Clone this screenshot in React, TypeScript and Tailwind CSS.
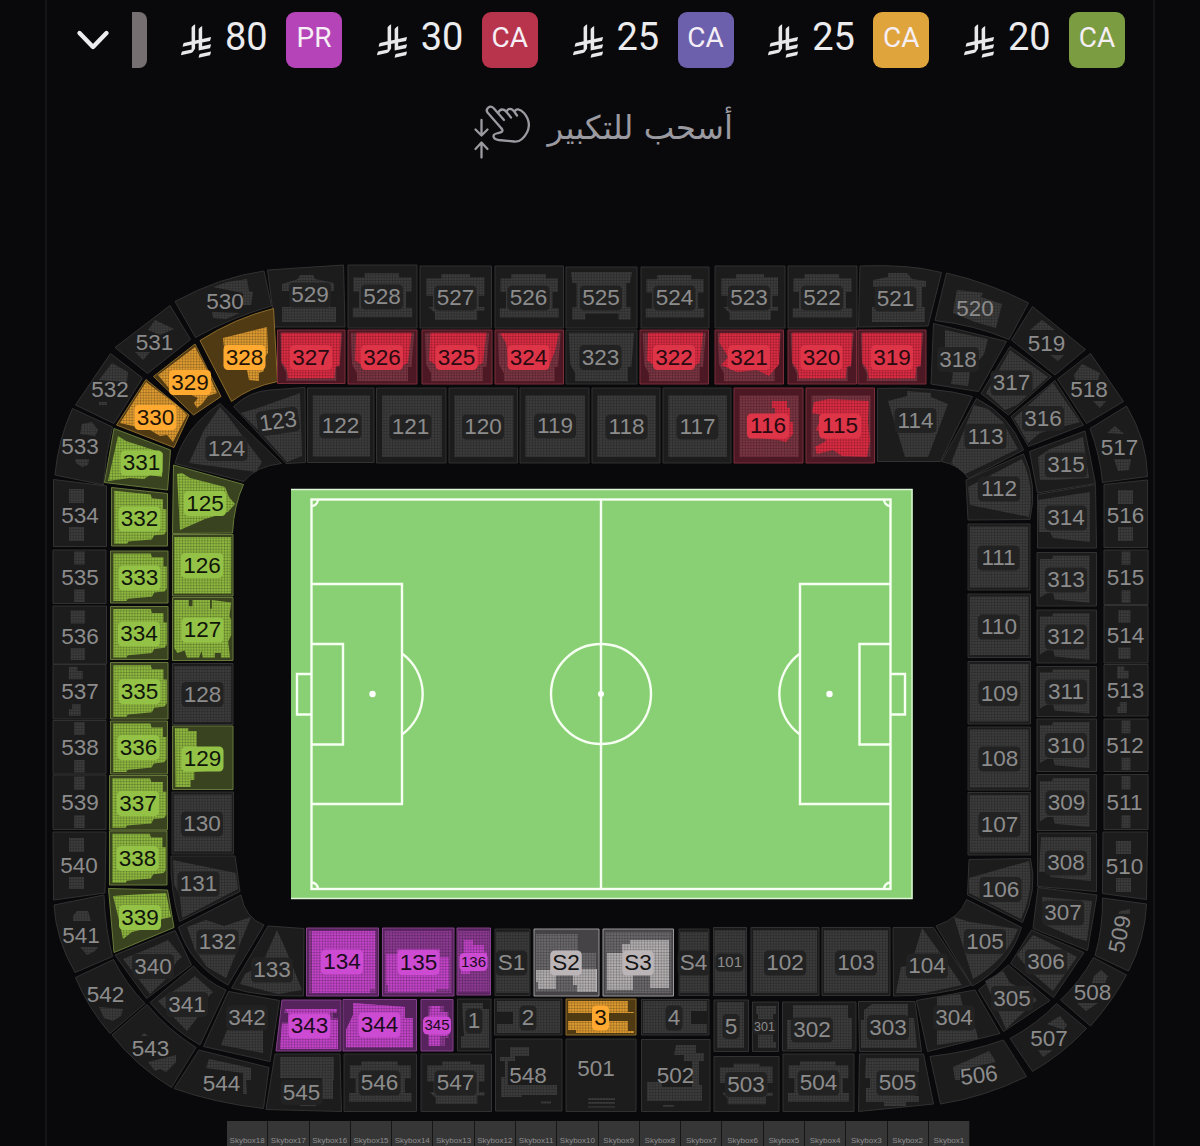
import { memo } from "react";

type Tone = "off" | "red" | "green" | "amber" | "purple" | "light";

interface Block {
  id: string;
  // four corners, clockwise from the top left
  box: number[];
  x: number;
  y: number;
  tone?: Tone;
  // outline for the blocks that follow the bend of the bowl
  d?: string;
  // template name or a path of its own
  seats?: string;
  // seats still on sale, drawn brighter
  free?: string;
  size?: number;
  rotate?: number;
}

const TONES: Record<
  Tone,
  { fill: string; line: string; seats: string; free: string; chip: string; text: string }
> = {
  off: { fill: "#1c1c1d", line: "#313131", seats: "#3c3c3c", free: "#3c3c3c", chip: "#222222", text: "#8c8c8c" },
  red: { fill: "#4b1823", line: "#7d2c3a", seats: "#7a3542", free: "#dc2c43", chip: "#dd3448", text: "#2a0a10" },
  green: { fill: "#39431f", line: "#66783a", seats: "#8fb840", free: "#8fb840", chip: "#93c247", text: "#10150a" },
  amber: { fill: "#4f3a14", line: "#8b6a2a", seats: "#dd9a30", free: "#dd9a30", chip: "#ffa931", text: "#1f1405" },
  purple: { fill: "#56235c", line: "#84408a", seats: "#8c3a92", free: "#c244c8", chip: "#cc4bd2", text: "#1c0a1e" },
  light: { fill: "#454345", line: "#9b999b", seats: "#6a686a", free: "#b3afb1", chip: "#bcb5b7", text: "#151515" },
};

// Seat areas as fractions of a block
const TEMPLATES: Record<string, number[][]> = {
  upper: [[0.08, 0.2, 0.24, 0.2, 0.24, 0.13, 0.74, 0.13, 0.74, 0.2, 0.92, 0.2, 0.92, 0.42, 0.84, 0.42, 0.84, 0.68, 0.93, 0.68, 0.93, 0.83, 0.07, 0.83, 0.07, 0.68, 0.16, 0.68, 0.16, 0.42, 0.08, 0.42]],
  upperB: [[0.09, 0.2, 0.3, 0.2, 0.3, 0.13, 0.7, 0.13, 0.7, 0.18, 0.9, 0.18, 0.9, 0.48, 0.82, 0.48, 0.82, 0.66, 0.9, 0.66, 0.9, 0.72, 0.8, 0.72, 0.8, 0.87, 0.21, 0.87, 0.21, 0.76, 0.12, 0.66, 0.18, 0.66, 0.18, 0.48, 0.09, 0.48]],
  upperC: [[0.07, 0.08, 0.93, 0.08, 0.9, 0.26, 0.85, 0.26, 0.85, 0.66, 0.91, 0.66, 0.91, 0.86, 0.74, 0.86, 0.74, 0.76, 0.27, 0.76, 0.27, 0.86, 0.09, 0.86, 0.09, 0.66, 0.15, 0.66, 0.15, 0.26, 0.09, 0.26]],
  lower: [[0.04, 0.05, 0.96, 0.05, 0.92, 0.68, 0.87, 0.68, 0.87, 0.95, 0.13, 0.95, 0.13, 0.8, 0.06, 0.64]],
  lowerFree: [[0.12, 0.05, 0.92, 0.05, 0.87, 0.6, 0.7, 0.74, 0.26, 0.7, 0.1, 0.56]],
  lowerWide: [[0.06, 0.05, 0.94, 0.05, 0.92, 0.66, 0.86, 0.68, 0.84, 0.9, 0.16, 0.9, 0.14, 0.74, 0.06, 0.6]],
  full: [[0.08, 0.1, 0.94, 0.1, 0.94, 0.92, 0.08, 0.92]],
  whole: [[0.03, 0.04, 0.97, 0.04, 0.97, 0.96, 0.03, 0.96]],
  left: [[0.05, 0.05, 0.7, 0.05, 0.72, 0.12, 0.92, 0.12, 0.92, 0.3, 0.98, 0.3, 0.98, 0.72, 0.94, 0.78, 0.76, 0.8, 0.72, 0.88, 0.5, 0.9, 0.3, 0.92, 0.28, 0.96, 0.05, 0.96]],
  right: [[0.05, 0.12, 0.25, 0.12, 0.27, 0.06, 0.88, 0.06, 0.88, 0.94, 0.3, 0.88, 0.27, 0.76, 0.17, 0.76, 0.05, 0.84]],
  stubs: [[0.4, 0.03, 0.6, 0.03, 0.6, 0.27, 0.4, 0.27], [0.4, 0.74, 0.6, 0.74, 0.6, 0.97, 0.4, 0.97]],
  stubsWide: [[0.33, 0.08, 0.6, 0.08, 0.6, 0.3, 0.33, 0.3], [0.33, 0.73, 0.6, 0.73, 0.6, 0.93, 0.33, 0.93]],
  stubsStep: [[0.3, 0.04, 0.46, 0.04, 0.46, 0.12, 0.56, 0.12, 0.56, 0.27, 0.3, 0.27], [0.36, 0.73, 0.52, 0.73, 0.52, 0.94, 0.3, 0.94, 0.3, 0.82, 0.36, 0.82]],
  speckled: [[0.03, 0.04, 0.27, 0.04, 0.27, 0.14, 0.33, 0.14, 0.33, 0.04, 0.62, 0.04, 0.62, 0.18, 0.65, 0.18, 0.65, 0.04, 0.97, 0.08, 0.94, 0.3, 0.97, 0.35, 0.97, 0.6, 0.92, 0.7, 0.95, 0.95, 0.8, 0.95, 0.8, 0.88, 0.7, 0.88, 0.7, 0.95, 0.5, 0.95, 0.48, 0.85, 0.44, 0.95, 0.24, 0.95, 0.2, 0.84, 0.08, 0.88, 0.03, 0.8]],
  west: [[0.04, 0.03, 0.26, 0.03, 0.26, 0.08, 0.4, 0.08, 0.4, 0.4, 0.8, 0.4, 0.7, 0.7, 0.36, 0.72, 0.36, 0.85, 0.3, 0.85, 0.3, 0.96, 0.05, 0.96]],
};

const rect = (x1: number, y1: number, x2: number, y2: number) => [x1, y1, x2, y1, x2, y2, x1, y2];

const BLOCKS: Block[] = [
  // 500 tier, north
  { id: "529", box: [267.5, 270, 343.5, 265, 345, 327, 275, 327], x: 310, y: 295, seats: "M282,284 L298,279 L300,275 H313 L315,279 L334,283 V291 H330 V307 H336 V322 H282 V307 H290 V291 H282Z" },
  { id: "528", box: rect(348, 265, 417, 328), x: 382, y: 297, seats: "upper" },
  { id: "527", box: rect(420, 266, 491.5, 328), x: 455.5, y: 298, seats: "upperB" },
  { id: "526", box: rect(495, 266, 563.5, 328), x: 528.5, y: 298, seats: "upper" },
  { id: "525", box: rect(566, 267, 637, 328), x: 601, y: 298, seats: "upperC" },
  { id: "524", box: rect(641, 267, 709, 328), x: 674.5, y: 298, seats: "upper" },
  { id: "523", box: rect(715, 266, 785, 328), x: 749, y: 298, seats: "upperB" },
  { id: "522", box: rect(788, 266, 857, 328), x: 822, y: 298, seats: "upper" },
  { id: "521", box: [860, 266, 941.5, 272.5, 928, 326, 858.5, 327], d: "M860,266 Q910,264 941.5,272.5 L928,326 L858.5,327Z", x: 895.5, y: 299, seats: "M873,280 L888,277 V273 H907 L912,279 L926,281 V287 H922 V307 H925 V322 H872 V307 H878 V287 H873Z" },
  { id: "520", box: [946.5, 273, 1028.5, 303, 1009, 339.5, 935, 320.5], d: "M946.5,273 Q990,283 1028.5,303 L1009,339.5 Q975,325 935,320.5Z", x: 975, y: 309, seats: "M957,290 L983,293 L981,297 L1002,304 L996,328 L975,322 L953,313 L955,300Z" },
  { id: "519", box: [1032.5, 306.5, 1085.5, 349.5, 1055, 375, 1011.5, 340], x: 1046.5, y: 344, seats: "M1030,330 L1037,324 L1042,320 L1055,330Z M1050,355 H1064 L1058,361Z" },
  { id: "518", box: [1090.5, 353.5, 1123.5, 401.5, 1086.5, 423.5, 1057.5, 379], x: 1089, y: 389.5, seats: "M1074,375 L1082,364 L1100,373 L1098,380 H1075Z M1093,401 H1106 L1100,408Z" },
  { id: "517", box: [1126.5, 406, 1147.5, 476.5, 1102.5, 482.5, 1090, 428.5], d: "M1126.5,406 Q1147,440 1147.5,476.5 L1102.5,482.5 Q1100,455 1090,428.5Z", x: 1119.5, y: 447.5, seats: "M1107,433 L1115,426 L1124,434Z M1114,459 H1131 L1129,470 L1118,471Z" },
  // 500 tier, west
  { id: "530", box: [175, 301.5, 264, 271, 271.5, 306, 195.5, 337.5], d: "M175,301.5 Q220,277 264,271 L271.5,306 Q230,318 195.5,337.5Z", x: 225, y: 302, seats: "M213,287 L227,282 L247,279 L249,291 L253,292 L251,305 L243,305 V293Z M212,312 L240,313 L226,319 L213,318Z" },
  { id: "531", box: [170, 305.5, 190.5, 339.5, 147.5, 373.5, 115, 347.5], x: 154.5, y: 342.5, seats: "M148,330 L155,320 L174,329 L160,335Z M135,352 H150 L143,360Z" },
  { id: "532", box: [110.5, 353.5, 142.5, 378, 114, 423.5, 75.5, 405], x: 110, y: 390, seats: "M112,363 L128,372 L127,382 L99,380Z M99,402 h8 v3 h-8Z" },
  { id: "533", box: [72.5, 408.5, 112.5, 427, 103.5, 485, 55, 475], d: "M72.5,408.5 L112.5,427 Q105,455 103.5,485 L55,475 Q58,440 72.5,408.5Z", x: 80, y: 447, seats: "M82,424 L92,422 L98,430 L95,436 L80,434Z M75,459 H89 L88,465 L82,467 L76,463Z" },
  { id: "534", box: [53.5, 479.5, 106.5, 486, 106.5, 546.5, 53.5, 546.5], x: 80, y: 515.5, seats: "M69,489 h15 v14 h-15Z M69,527 h15 v14 h-15Z" },
  { id: "535", box: rect(53, 550, 106, 603.5), x: 80, y: 577.5, seats: "stubs" },
  { id: "536", box: rect(53, 606, 106.5, 664), x: 80, y: 637, seats: "stubsWide" },
  { id: "537", box: rect(53, 664.5, 106, 719), x: 80, y: 692, seats: "stubsStep" },
  { id: "538", box: rect(53, 720.5, 106, 774), x: 80, y: 747.5, seats: "stubs" },
  { id: "539", box: rect(53, 775, 106, 829.5), x: 80, y: 803, seats: "stubs" },
  { id: "540", box: [53, 832, 106, 832, 105, 893, 53.5, 900], x: 79, y: 865.5, seats: "M69,838 h15 v14 h-15Z M69,877 h15 v12 h-15Z" },
  { id: "541", box: [54, 905, 104, 895, 112.5, 956.5, 75, 972.5], d: "M54,905 L104,895 Q105,928 112.5,956.5 L75,972.5 Q56,940 54,905Z", x: 81, y: 935.5, seats: "M77,911 H88 L91,921 H73 V916Z M80,947 L98,947 L95,951 L87,955Z" },
  { id: "542", box: [75.5, 977.5, 113.5, 959.5, 145, 1003.5, 110, 1033.5], d: "M75.5,977.5 L113.5,959.5 Q126,984 145,1003.5 L110,1033.5 Q88,1008 75.5,977.5Z", x: 105.5, y: 995, seats: "M99,1007 L123,1009 L121,1016 L113,1021 L104,1018Z" },
  { id: "543", box: [112, 1035, 147, 1004.5, 196, 1047.5, 171.5, 1087.5], d: "M112,1035 L147,1004.5 Q168,1030 196,1047.5 L171.5,1087.5 Q136,1066 112,1035Z", x: 150.5, y: 1049, seats: "M148,1062 L176,1055 L176,1062 L166,1072 L160,1069 L155,1071Z M144,1033 l4,3 h-7Z" },
  { id: "544", box: [199, 1050, 269, 1067.5, 263.5, 1108.5, 174, 1088.5], d: "M199,1050 L269,1067.5 L263.5,1108.5 Q215,1103 174,1088.5Z", x: 221.5, y: 1083.5, seats: "M209,1059 L251,1068 V1080 H246 L247,1094 H243 V1073 L206,1068Z" },
  { id: "545", box: [275, 1054, 340, 1054, 341.5, 1111.5, 266, 1109.5], x: 301.5, y: 1092.5, seats: "M280,1057 H334 V1080 H333 V1099 H322 V1078 H280Z M300,1104 H316 V1106 H300Z" },
  // 500 tier, east
  { id: "516", box: [1104, 484.5, 1147.5, 480, 1147.5, 547.5, 1104, 547.5], x: 1125.5, y: 515.5, seats: "M1118,490 h15 v14 h-15Z M1118,527 h15 v14 h-15Z" },
  { id: "515", box: rect(1104, 550, 1148, 604.5), x: 1125.5, y: 577.5, seats: "stubs" },
  { id: "514", box: rect(1104, 605.5, 1148, 663), x: 1125.5, y: 635.5, seats: "stubsWide" },
  { id: "513", box: rect(1104, 664.5, 1148, 716), x: 1125.5, y: 691, seats: "stubsStep" },
  { id: "512", box: rect(1104, 719, 1148, 771.5), x: 1125, y: 745.5, seats: "stubs" },
  { id: "511", box: rect(1104, 774.5, 1148, 829.5), x: 1124.5, y: 803, seats: "stubs" },
  { id: "510", box: [1103, 832, 1147.5, 832, 1146.5, 899.5, 1102.5, 893.5], x: 1124.5, y: 866.5, seats: "M1116,841 h15 v13 h-15Z M1116,878 h15 v14 h-15Z" },
  { id: "509", box: [1102.5, 898, 1146.5, 904, 1128.5, 971, 1095, 955.5], d: "M1102.5,898 L1146.5,904 Q1145,940 1128.5,971 L1095,955.5 Q1103,928 1102.5,898Z", x: 1120, y: 934, rotate: -78, seats: "M1120,911 L1130,909 V914 H1118Z" },
  { id: "508", box: [1093.5, 957.5, 1126.5, 975, 1090.5, 1026, 1060.5, 1000], d: "M1093.5,957.5 L1126.5,975 Q1112,1002 1090.5,1026 L1060.5,1000 Q1080,982 1093.5,957.5Z", x: 1092.5, y: 992.5, seats: "M1094,976 L1101,970 L1108,976 L1105,983 H1092Z M1077,1003 H1098 L1086,1011Z" },
  { id: "507", box: [1056.5, 1003.5, 1086.5, 1028.5, 1032.5, 1071.5, 1010, 1038.5], d: "M1056.5,1003.5 L1086.5,1028.5 Q1064,1053 1032.5,1071.5 L1010,1038.5 Q1037,1024 1056.5,1003.5Z", x: 1049, y: 1038.5, seats: "M1047,1024 L1060,1016 L1067,1025 L1064,1030Z M1038,1050 H1053 L1043,1057Z" },
  { id: "506", box: [1003.5, 1040, 1026.5, 1076.5, 940.5, 1104, 930, 1056.5], d: "M1003.5,1040 L1026.5,1076.5 Q985,1097 940.5,1104 L930,1056.5 Q970,1052 1003.5,1040Z", x: 979, y: 1075.5, rotate: -7, seats: "M953,1067 L989,1051 L996,1062 L960,1070 V1080 H955Z" },
  // 500 tier, south
  { id: "546", box: rect(344, 1054, 416.5, 1111.5), x: 379.5, y: 1083, seats: "upper" },
  { id: "547", box: rect(421, 1054, 491.5, 1111.5), x: 455.5, y: 1083, seats: "upperB" },
  { id: "548", box: rect(495.5, 1039, 562, 1111), x: 528, y: 1075.5, seats: "M510,1047 H529 V1056 H515 V1061 H508 V1085 H557 V1095 H522 V1097 H501 V1077 H505 V1061 H500 V1057 H510Z M541,1101.5 h10 v2 h-10Z" },
  { id: "501", box: rect(566, 1039, 636, 1111.5), x: 596, y: 1068.5, seats: "M588,1098 h27 v2 h-27Z M588,1102 h27 v2 h-27Z M588,1106 h27 v1.5 h-27Z" },
  { id: "502", box: rect(641.5, 1039.5, 710, 1111.5), x: 675.5, y: 1075.5, seats: "M676,1045 H696 V1053 H704 V1061 H699 V1085 H702 V1101 H647 V1082 H662 V1087 H692 V1061 H684 V1055 H674Z M663,1105 h11 v2 h-11Z" },
  { id: "503", box: rect(714, 1056.5, 779, 1111.5), x: 746, y: 1084.5, seats: "upperB" },
  { id: "504", box: rect(783, 1054, 854, 1111.5), x: 818.5, y: 1083, seats: "upper" },
  { id: "505", box: [859.5, 1054, 923.5, 1054, 933.5, 1104, 858.5, 1111.5], x: 897.5, y: 1083, seats: "M866,1058 H919 V1072 H915 V1096 H919 V1102 H906 V1106 H884 V1102 H866 V1088 H870 V1078 H865Z" },

  // 300 tier
  { id: "328", box: [200, 340.5, 273.5, 308.5, 277.5, 381.5, 231.5, 401.5], d: "M200,340.5 Q235,318 273.5,308.5 L277.5,381.5 Q250,387 231.5,401.5Z", x: 244.5, y: 357.5, tone: "amber", seats: "M223,338 L267,327 L268,353 L264,358 V371 L259,373 V381 L249,380 L247,370 L226,367Z" },
  { id: "329", box: [153.5, 376.5, 195, 344, 221, 396.5, 193.5, 415], x: 190, y: 382.5, tone: "amber", seats: "M158,375 L195,347 L207,370 L217,393 L208,396 L202,404 L197,408 L194,403 L198,398 L187,393 L172,392Z" },
  { id: "330", box: [146, 379.5, 189, 415, 174, 447.5, 116.5, 425], x: 155.5, y: 417.5, tone: "amber", seats: "M120,423 L146,382 L177,405 L187,415 L173,442 L167,435 L160,436 L150,430Z" },
  { id: "331", box: [114, 428.5, 170.5, 450, 167.5, 490, 104.5, 482.5], x: 141.5, y: 463, tone: "green", seats: "M118,436 L126,441 L163,453 L162,477 L150,475 L144,479 L130,478 L108,481Z" },
  { id: "332", box: [111.5, 487.5, 167.5, 493.5, 167.5, 546, 111.5, 546], x: 139.5, y: 519, tone: "green", seats: "left" },
  { id: "333", box: rect(110.5, 551, 168, 603), x: 139.5, y: 578, tone: "green", seats: "left" },
  { id: "334", box: rect(110.5, 606.5, 168, 659.5), x: 139, y: 634, tone: "green", seats: "left" },
  { id: "335", box: rect(110.5, 662.5, 168, 719), x: 139.5, y: 691.5, tone: "green", seats: "left" },
  { id: "336", box: rect(110.5, 721, 167.5, 774), x: 138.5, y: 747.5, tone: "green", seats: "left" },
  { id: "337", box: rect(109.5, 775.5, 167.5, 830), x: 138, y: 803.5, tone: "green", seats: "left" },
  { id: "338", box: rect(109.5, 831, 167, 885), x: 137.5, y: 858.5, tone: "green", seats: "left" },
  { id: "339", box: [108.5, 888.5, 167.5, 890, 174, 927.5, 114, 952.5], x: 140, y: 917.5, tone: "green", seats: "M113,896 L128,895 L166,893 L171,917 L162,919 L148,928 L132,932 L123,939 L119,920Z" },
  { id: "340", box: [115, 955, 175, 930.5, 191.5, 965, 146.5, 998.5], x: 153, y: 966.5, seats: "M123,959 L155,946 L168,940 L182,957 L177,961 L165,980 L150,994Z" },
  { id: "341", box: [150, 1002.5, 193.5, 966, 226, 990, 200, 1045], d: "M150,1002.5 L193.5,966 Q207,982 226,990 L200,1045 Q173,1030 150,1002.5Z", x: 187, y: 1004.5, seats: "M158,1001 L186,983 L195,976 L213,992 L205,1000 L197,1018 L187,1031Z" },
  { id: "342", box: [228.5, 991.5, 279.5, 1000.5, 270, 1061.5, 203.5, 1046.5], x: 247, y: 1018, seats: "M227,1030 H263 V1053 L221,1045Z" },
  { id: "343", box: [282, 1000, 341, 1000, 341, 1051, 276, 1051], x: 309.5, y: 1026, tone: "purple", seats: "M285,1009 H337 V1013 H333 V1018 H338 V1049 H280 L282,1022 H288 V1013 H284Z", free: "M285,1009 H337 V1012 H330 V1020 H338 V1049 H280 L282,1024 H288 V1013Z" },
  { id: "344", box: rect(343, 999.5, 416.5, 1051), x: 379.5, y: 1025, tone: "purple", seats: "M353,1003 L405,1007 V1018 H413 V1048 H346 V1030 L353,1015Z", free: "M353,1003 L405,1007 V1018 H413 V1047 H346 V1030 L353,1015Z" },
  { id: "345", box: rect(421, 999.5, 453, 1051), x: 437, y: 1025.5, tone: "purple", size: 15, seats: "M428,1006 H444 V1012 H449 V1038 H445 V1046 H428Z", free: "M431,1006 H440 V1012 H447 V1036 H440 V1046 H429 V1018Z" },
  { id: "1", box: rect(457.5, 999, 491, 1051), x: 474, y: 1021, seats: "M462,1003 H483 V1009 H489 V1048 H461 V1036 H464Z" },
  { id: "2", box: rect(494.5, 999, 562, 1035), x: 528, y: 1018, seats: "M497,1001 H560 V1033 H497 V1024 H513 V1012 H497Z" },
  { id: "3", box: rect(566, 999, 636, 1035), x: 600.5, y: 1018, tone: "amber", seats: "M568,1001 H628 V1012 H634 V1013 H568Z M568,1021 H628 V1031 H634 V1033 H576 V1030 H568Z" },
  { id: "4", box: rect(641.5, 999.5, 709, 1035), x: 674, y: 1018, seats: "M643,1001 H707 V1011 H691 V1024 H707 V1033 H643Z" },
  { id: "5", box: rect(714, 1000, 748.5, 1051.5), x: 731, y: 1026.5, seats: "M717,1002 H744 V1048 H717Z" },
  { id: "301", box: rect(752.5, 1002, 778.5, 1051.5), x: 764.5, y: 1027, size: 12.5, seats: "M756,1006 H776 V1014 H773 V1042 H776 V1048 H758 V1014 H756Z" },
  { id: "302", box: rect(782.5, 1002, 856, 1051), x: 812, y: 1030, seats: "M793,1005 H848 V1018 H852 V1049 H787 V1020 H793Z" },
  { id: "303", box: [858.5, 1001.5, 915, 1001.5, 921.5, 1051.5, 859.5, 1051.5], x: 888, y: 1027.5, seats: "M872,1004 H908 V1018 H914 L917,1048 H861 V1020 H864 V1010Z" },
  { id: "304", box: [916.5, 1000.5, 975, 990, 1000, 1033.5, 927.5, 1051.5], x: 954, y: 1018, seats: "M937,997 L960,994 L963,1007 L976,1030 L978,1039 L937,1045Z" },
  { id: "305", box: [1008.5, 965, 1050, 1000.5, 1003.5, 1031.5, 978.5, 990], x: 1012, y: 998.5, seats: "M985,981 L1003,971 L1010,983 L1028,992 L1037,1000 L1026,1010 L1006,1029Z" },
  { id: "306", box: [1031.5, 930, 1084, 952.5, 1053.5, 997.5, 1010.5, 963.5], x: 1046, y: 962, seats: "M1017,955 L1033,935 L1050,943 L1060,948 L1077,957 L1053,991 L1030,971Z" },
  { id: "307", box: [1038, 887.5, 1097, 895, 1087.5, 950.5, 1033, 928.5], x: 1063, y: 913, seats: "M1042,897 L1092,901 L1087,941 L1075,938 L1045,925Z" },
  { id: "308", box: [1037.5, 833, 1096.5, 833, 1096.5, 891.5, 1037.5, 886.5], x: 1066, y: 863, seats: "M1041,837 H1091 V881 L1050,877 V872 H1039Z" },
  { id: "309", box: rect(1037, 774.5, 1096.5, 830.5), x: 1066.5, y: 803, seats: "right" },
  { id: "310", box: rect(1037, 719, 1096.5, 771.5), x: 1066, y: 745.5, seats: "right" },
  { id: "311", box: rect(1037, 666.5, 1096.5, 716.5), x: 1066, y: 692, seats: "right" },
  { id: "312", box: rect(1037, 610, 1096.5, 663), x: 1066, y: 637, seats: "right" },
  { id: "313", box: rect(1037, 552.5, 1096.5, 606), x: 1066, y: 580, seats: "right" },
  { id: "314", box: [1037.5, 494.5, 1095.5, 484.5, 1096.5, 548, 1037.5, 548], x: 1066, y: 518, seats: "M1038,500 L1090,492 V542 L1053,538 L1050,532 H1039Z" },
  { id: "315", box: [1029.5, 451.5, 1085, 431, 1095.5, 483.5, 1037.5, 493], x: 1066, y: 465, seats: "M1050,449 L1083,437 L1089,478 L1055,480 L1040,480 L1038,457Z" },
  { id: "316", box: [1055, 380.5, 1083.5, 425, 1028.5, 446.5, 1011, 416.5], x: 1043, y: 418.5, seats: "M1053,383 L1080,422 L1040,433 L1028,443 L1014,418Z" },
  { id: "317", box: [1010, 346.5, 1051.5, 376.5, 1008.5, 415, 981, 393.5], x: 1011.5, y: 383, seats: "M1010,350 L1048,377 L1017,405 L1005,410 L986,393Z" },
  { id: "318", box: [933.5, 323.5, 1006.5, 341.5, 978.5, 391.5, 931, 384], x: 958, y: 359.5, seats: "M945,330 L988,339 L984,354 L970,372 L968,386 L951,384 L953,373 L946,370 L945,350Z" },
  { id: "319", box: rect(858, 330, 926, 384), x: 892, y: 357.5, tone: "red", seats: "lower", free: "lowerWide" },
  { id: "320", box: rect(788, 330, 856.5, 384), x: 821.5, y: 357.5, tone: "red", seats: "lower", free: "lowerWide" },
  { id: "321", box: rect(715, 330, 783.5, 384), x: 749, y: 357.5, tone: "red", seats: "lower", free: "M720,333 H780 L779,364 L769,376 L757,370 L737,372 L721,365 L728,357 L719,342Z" },
  { id: "322", box: rect(640, 330, 708.5, 384), x: 674, y: 357.5, tone: "red", seats: "lower", free: "lowerFree" },
  { id: "323", box: rect(566, 330, 637, 384), x: 600.5, y: 357.5, seats: "lower" },
  { id: "324", box: rect(495, 330, 563.5, 384), x: 528.5, y: 357.5, tone: "red", seats: "lower", free: "M500,333 H559 L555,351 L549,366 L509,367 L506,343Z" },
  { id: "325", box: rect(422, 330, 492, 384), x: 456.5, y: 357.5, tone: "red", seats: "lower", free: "lowerFree" },
  { id: "326", box: rect(348, 330, 417, 384), x: 382, y: 357.5, tone: "red", seats: "lower", free: "lowerFree" },
  { id: "327", box: rect(277.5, 330, 345, 383.5), x: 311, y: 357.5, tone: "red", seats: "lower", free: "lowerWide" },

  // 100 tier
  { id: "123", box: [233.5, 406.5, 305, 387.5, 305.5, 462.5, 286, 463.5], d: "M233.5,406.5 Q250,391 270,390 L305,387.5 L305.5,462.5 L286,463.5Z", x: 278, y: 421.5, rotate: -8, seats: "M241,413 L258,408 L300,393 L302,456 L287,462 L262,434Z" },
  { id: "122", box: rect(307.5, 388, 374, 462.5), x: 340.5, y: 426, seats: "full" },
  { id: "121", box: rect(376.5, 388, 446, 463), x: 410.5, y: 427, seats: "full" },
  { id: "120", box: rect(449, 388, 517.5, 463), x: 483, y: 427, seats: "full" },
  { id: "119", box: rect(520, 388, 589, 463), x: 555, y: 426, seats: "full" },
  { id: "118", box: rect(592, 388, 660, 463), x: 626.5, y: 427, seats: "full" },
  { id: "117", box: rect(663, 388, 731, 463), x: 697.5, y: 427, seats: "full" },
  { id: "116", box: rect(734, 388, 803, 463), x: 768, y: 426, tone: "red", seats: "full", free: "M772,401 H787 V408 H790 V422 H793 V434 L786,442 L778,440 L760,438 V418 H775 V408 H772Z" },
  { id: "115", box: rect(806, 388, 874.5, 463), x: 840, y: 426, tone: "red", seats: "full", free: "M814,402 L829,399 L869,401 L868,422 L870,440 L867,457 L842,456 L833,450 L817,454 L815,447 L826,441 L822,433 L816,430 L822,415 L812,413Z" },
  { id: "114", box: [877.5, 388.5, 972.5, 396.5, 940.5, 461.5, 877.5, 461.5], d: "M877.5,388.5 Q935,386 972.5,396.5 L940.5,461.5 H877.5Z", x: 915.5, y: 420.5, seats: "M888,401 L907,396 V391 L931,393 V397 L948,404 L928,457 L905,457Z" },
  { id: "113", box: [976.5, 398.5, 1023.5, 450, 968.5, 478.5, 941.5, 461.5], d: "M976.5,398.5 Q1010,415 1023.5,450 L968.5,478.5 Q960,465 941.5,461.5Z", x: 985.5, y: 436.5, seats: "M974,405 L988,409 L1003,422 L1018,449 L965,474 L951,463Z" },
  { id: "112", box: [1023.5, 454, 1030, 519.5, 968, 520, 966, 480], d: "M1023.5,454 Q1038,485 1030,519.5 L968,520 L966,480Z", x: 999, y: 489, seats: "M968,487 L1022,459 Q1035,485 1029,517 L970,505Z" },
  { id: "111", box: rect(968, 524, 1030, 590), x: 998.5, y: 558, seats: "whole" },
  { id: "110", box: rect(968, 594, 1030.5, 657.5), x: 999, y: 627, seats: "whole" },
  { id: "109", box: rect(968, 661.5, 1030.5, 724), x: 999.5, y: 693.5, seats: "whole" },
  { id: "108", box: rect(968, 727, 1030.5, 790), x: 999.5, y: 759, seats: "whole" },
  { id: "107", box: rect(968, 792.5, 1030.5, 855), x: 999.5, y: 824.5, seats: "whole" },
  { id: "106", box: [969, 859.5, 1030.5, 858.5, 1022.5, 922.5, 967.5, 895], d: "M969,859.5 L1030.5,858.5 Q1038,890 1022.5,922.5 L967.5,895Z", x: 1000.5, y: 889.5, seats: "M969,878 L1029,861 Q1034,892 1021,919 L969,893Z" },
  { id: "105", box: [966.5, 899.5, 1021.5, 927.5, 972.5, 986, 936, 926], d: "M966.5,899.5 L1021.5,927.5 Q1010,965 972.5,986 L936,926 Q960,918 966.5,899.5Z", x: 985, y: 941.5, seats: "M954,917 L970,922 L1018,929 Q1006,960 973,979Z" },
  { id: "104", box: [893, 927.5, 933.5, 927.5, 971.5, 985, 893.5, 996], d: "M893,927.5 H933.5 L971.5,985 Q940,996 893.5,996Z", x: 927, y: 966, seats: "M922,928 L938,950 L962,985 L925,993 L896,993 L901,967 L911,965Z" },
  { id: "103", box: rect(822, 927.5, 890, 995.5), x: 856, y: 963, seats: "whole" },
  { id: "102", box: rect(751, 927.5, 819, 995.5), x: 785, y: 963, seats: "whole" },
  { id: "101", box: rect(713.5, 927.5, 746.5, 995.5), x: 729.5, y: 962.5, size: 15, seats: "whole" },
  { id: "S4", box: rect(679, 929, 709, 995.5), x: 693.5, y: 963, seats: "whole" },
  { id: "S3", box: rect(603, 929, 673.5, 996), x: 638, y: 963, tone: "light", seats: "whole", free: "M607,953 H622 V944 H630 V940 H669 V988 H650 V975 H633 V990 H607Z" },
  { id: "S2", box: rect(534, 929, 599, 996), x: 566, y: 963, tone: "light", seats: "M536,934 H578 V953 H596 V992 H536Z", free: "M536,970 H552 V974 H578 V969 H597 V992 H577 V985 H573 V975 H556 V989 H538 V982 H536Z" },
  { id: "S1", box: rect(495, 929, 530, 995.5), x: 511.5, y: 963, seats: "whole" },
  { id: "136", box: rect(457, 928, 490.5, 995), x: 473.5, y: 962, tone: "purple", size: 15, seats: "whole", free: "M464,940 H473 V945 H484 V952 H487 V966 H482 V971 H470 V974 H461 V956 H464Z" },
  { id: "135", box: rect(382.5, 928, 454, 996), x: 418.5, y: 962.5, tone: "purple", seats: "whole", free: "M386,954 H397 V949 H440 V957 H449 V989 H436 V992 H388 V985 H386Z" },
  { id: "134", box: rect(306.5, 928, 378.5, 996), x: 342, y: 962, tone: "purple", seats: "whole", free: "M312,931 H375 V989 H370 V993 H312Z" },
  { id: "133", box: [268, 926, 304, 928.5, 303.5, 996, 231.5, 988], d: "M268,926 L304,928.5 L303.5,996 Q260,997 231.5,988Z", x: 272, y: 970, seats: "M277,930 L286,950 L302,990 L278,994 L240,984 L245,974 L262,964Z" },
  { id: "132", box: [241, 895, 264, 925, 228, 985, 178.5, 927], d: "M241,895 Q245,918 264,925 L228,985 Q190,965 178.5,927Z", x: 217.5, y: 942, seats: "M187,927 L206,920 L224,926 L251,917 L226,978 L207,967 L195,950Z" },
  { id: "131", box: [171, 856, 235, 856, 240, 891.5, 179.5, 921.5], d: "M171,856 H235 L240,891.5 L179.5,921.5 Q170,890 171,856Z", x: 198.5, y: 884, seats: "M173,860 L192,864 L236,873 L238,889 L182,918 L180,897 L174,884Z" },
  { id: "130", box: rect(172, 792, 233.5, 854), x: 202, y: 824, seats: "whole" },
  { id: "129", box: rect(172.5, 726, 233, 789.5), x: 202.5, y: 759, tone: "green", seats: "west" },
  { id: "128", box: rect(172.5, 663.5, 233, 724.5), x: 202.5, y: 694.5, seats: "whole" },
  { id: "127", box: rect(172.5, 597.5, 233, 660.5), x: 202.5, y: 630, tone: "green", seats: "speckled" },
  { id: "126", box: rect(172.5, 534.5, 233, 596), x: 202, y: 565.5, tone: "green", seats: "whole" },
  { id: "125", box: [173.5, 465, 243.5, 484.5, 232.5, 533, 172.5, 533.5], d: "M173.5,465 L243.5,484.5 Q234,505 232.5,533 L172.5,533.5Z", x: 205, y: 503.5, tone: "green", seats: "M177,474 L182,473 L190,478 L225,487 L229,497 L235,504 L228,512 L205,519 L180,530Z" },
  { id: "124", box: [220, 403.5, 281.5, 463.5, 244, 481.5, 175, 463.5], d: "M220,403.5 L281.5,463.5 Q256,466 244,481.5 L175,463.5 Q184,428 220,403.5Z", x: 226.5, y: 448.5, seats: "M220,407 L227,415 L262,462 L256,472 L189,463 L204,430Z" },
];

const BARE = /^5(0[126-9]|1\d|20|3\d|4[0-4]|48)$/;

const fit = (box: number[], shape: number[]) => {
  const [ax, ay, bx, by, cx, cy, dx, dy] = box;
  let d = "";
  for (let i = 0; i < shape.length; i += 2) {
    const u = shape[i];
    const v = shape[i + 1];
    const x = (1 - v) * ((1 - u) * ax + u * bx) + v * ((1 - u) * dx + u * cx);
    const y = (1 - v) * ((1 - u) * ay + u * by) + v * ((1 - u) * dy + u * cy);
    d += `${i === 0 ? "M" : "L"}${x.toFixed(1)},${y.toFixed(1)} `;
  }
  return d + "Z";
};

const seatPath = (box: number[], seats: string) =>
  TEMPLATES[seats] ? TEMPLATES[seats].map((shape) => fit(box, shape)).join(" ") : seats;

const StadiumBlock = memo<{ block: Block }>(({ block }) => {
  const { id, box, x, y, rotate, tone = "off", size = 22.5 } = block;
  const color = TONES[tone];
  const outline = block.d ?? fit(box, [0, 0, 1, 0, 1, 1, 0, 1]);
  const seats = block.seats ? seatPath(box, block.seats) : "";
  const free = block.free ? seatPath(box, block.free) : "";
  const chipWidth = id.length * size * 0.556 + (size < 20 ? 3 : 4.5) + (id[0] === "S" ? 2 : 0);
  const chipHeight = size < 20 ? size + 3 : 25;

  return (
    <g>
      <path d={outline} fill={color.fill} stroke={color.line} strokeWidth={1} />
      <path d={seats} fill={color.seats} />
      {free && <path d={free} fill={color.free} />}
      <path d={seats} fill="url(#rows)" />
      <g transform={rotate ? `rotate(${rotate} ${x} ${y})` : undefined}>
        {!BARE.test(id) && (
          <rect
            x={x - chipWidth / 2}
            y={y - chipHeight / 2}
            width={chipWidth}
            height={chipHeight}
            rx={4.5}
            fill={color.chip}
          />
        )}
        <text x={x} y={y + size * 0.36 - 0.8} fontSize={size} textAnchor="middle" fill={color.text}>
          {id}
        </text>
      </g>
    </g>
  );
});

StadiumBlock.displayName = "StadiumBlock";

const Pitch = () => (
  <g fill="none" stroke="#f6fff2" strokeWidth={2.4}>
    <rect x={291} y={489} width={621.5} height={410} fill="#88d073" stroke="none" />
    <path d="M291,489.5 H912 V898.5 H291" stroke="#dff5d8" strokeWidth={1.4} />
    <rect x={311.5} y={499.5} width={579} height={389.5} />
    <path d="M601,499.5 V889" />
    <circle cx={601} cy={694} r={50} />
    <path d="M311.5,584 H402 V804 H311.5 M311.5,644 H343 V744.5 H311.5 M311.5,674 H297 V714.5 H311.5" />
    <path d="M890.5,584 H800 V804 H890.5 M890.5,644 H859.5 V744.5 H890.5 M890.5,674 H905 V714.5 H890.5" />
    <path d="M402,653.5 A50,50 0 0 1 402,734.5 M800,653.5 A50,50 0 0 0 800,734.5" />
    <path d="M318,499.5 A6.5,6.5 0 0 1 311.5,506 M884,499.5 A6.5,6.5 0 0 0 890.5,506 M311.5,882.5 A6.5,6.5 0 0 1 318,889 M890.5,882.5 A6.5,6.5 0 0 0 884,889" />
    <g fill="#ffffff" stroke="none">
      <circle cx={601} cy={694} r={3} />
      <circle cx={372.5} cy={694} r={3.2} />
      <circle cx={829.5} cy={694} r={3.2} />
    </g>
  </g>
);

const Riyal = () => (
  <svg viewBox="0 0 1124.14 1256.39" className="mt-6 h-[34px] w-[30px] shrink-0" fill="#e8e8ea">
    <path d="M699.62,1113.02c-20.06,44.48-33.32,92.75-38.4,143.37l424.51-90.24c20.06-44.47,33.31-92.75,38.4-143.37l-424.51,90.24Z" />
    <path d="M1085.73,895.8c20.06-44.47,33.32-92.75,38.4-143.37l-330.68,70.33v-135.2l292.27-62.11c20.06-44.47,33.32-92.75,38.4-143.37l-330.68,70.27V66.13c-50.67,28.45-95.67,66.32-132.25,110.99v403.35l-132.25,28.11V0c-50.67,28.44-95.67,66.32-132.25,110.99v525.69l-295.91,62.88c-20.06,44.47-33.33,92.75-38.42,143.37l334.33-71.05v170.26l-358.3,76.14c-20.06,44.47-33.32,92.75-38.4,143.37l375.04-79.7c30.53-6.35,56.77-24.4,73.83-49.24l68.78-101.97v-.02c7.14-10.55,11.3-23.27,11.3-36.97v-149.98l132.25-28.11v270.4l424.53-90.28Z" />
  </svg>
);

const PRICES = [
  { price: 80, code: "PR", color: "bg-[#b444b7]" },
  { price: 30, code: "CA", color: "bg-[#b8334c]" },
  { price: 25, code: "CA", color: "bg-[#6c60ac]" },
  { price: 25, code: "CA", color: "bg-[#dfa43c]" },
  { price: 20, code: "CA", color: "bg-[#7b9c40]" },
];

const PriceBar = () => (
  <header className="flex h-[86px] items-start pl-[29px] font-['Roboto',sans-serif]">
    <svg viewBox="0 0 34 22" className="mt-[29px] h-[22px] w-[34px] shrink-0" fill="none">
      <path d="M3.5 4 L17 18 L30.5 4" stroke="#ededef" strokeWidth={4.4} strokeLinecap="round" strokeLinejoin="round" />
    </svg>
    <div className="mt-3 ml-[22px] h-14 w-[15px] shrink-0 rounded-r-lg bg-[#766f72]" />
    <div className="ml-[34px] flex w-[944px] shrink-0 justify-between">
      {PRICES.map(({ price, code, color }, i) => (
        <div key={i} className="flex w-[161px] items-start">
          <Riyal />
          <span className="mt-3.5 w-[75px] pl-[14px] text-[38px] leading-[46px] text-[#ececee]">
            {price}
          </span>
          <span
            className={`mt-3 h-14 w-14 shrink-0 rounded-[9px] text-center text-[28px] leading-[51px] text-[#f5eef5] ${color}`}
          >
            {code}
          </span>
        </div>
      ))}
    </div>
  </header>
);

const ZoomHint = () => (
  <div className="flex h-[164px] items-start pl-[425px] text-[#9b9aa1]">
    <svg viewBox="472 100 62 62" className="mt-[14px] h-[62px] w-[62px] shrink-0" fill="none" stroke="currentColor" strokeWidth={2.3} strokeLinecap="round" strokeLinejoin="round">
      <path d="M501.5,128.5 L487.5,112.5 C485,109 490,104.5 493.5,108 L504,120" />
      <path d="M498,113 C500,108.5 504,108.5 506.5,112 L511,117.5 M506.5,112 C508,107.5 512,108 514.5,112 L517,115.5 M514.5,112 C515.5,108 520,108.5 524,113 C531,121 530.5,131 522,139 C519.5,141.5 517,141.8 514,141.5 L498.5,140 C492.5,139 492,134.5 496.5,133.5 C501.5,132.5 504,131.5 501.5,128.5" />
      <path d="M481.5,120 V135 M475.5,129.5 L481.5,135.5 L487.5,129.5 M481.5,157.5 V143 M475.5,149 L481.5,142.5 L487.5,149" />
    </svg>
    <p dir="rtl" className="ml-[13px] w-[186px] text-[32.5px] leading-[84px] whitespace-nowrap font-['DejaVu_Sans',sans-serif]">
      أسحب للتكبير
    </p>
  </div>
);

const SKYBOXES = Array.from({ length: 18 }, (_, i) => 18 - i);

export default function App() {
  return (
    <div className="h-[1146px] w-[1200px] overflow-hidden bg-[#09090b]">
      <main className="mx-auto h-full w-[1110px] border-x-2 border-[#151519]">
        <PriceBar />
        <ZoomHint />
        <svg viewBox="47 250 1106 871" className="block h-[871px] w-full font-['Liberation_Sans',Arial,sans-serif]">
          <defs>
            <pattern id="rows" width={2.8} height={2.8} patternUnits="userSpaceOnUse">
              <path d="M0,0.4 H2.8 M0.4,0 V2.8" stroke="#000000" strokeOpacity={0.2} strokeWidth={0.9} />
            </pattern>
          </defs>
          {BLOCKS.map((block) => (
            <StadiumBlock key={block.id} block={block} />
          ))}
          <Pitch />
        </svg>
        <div className="ml-[180px] flex h-[25px] w-[743px] font-['Liberation_Sans',Arial,sans-serif]">
          {SKYBOXES.map((n) => (
            <div
              key={n}
              className="flex-1 border-r border-[#161616] bg-[#363637] text-center text-[8px] leading-[40px] whitespace-nowrap text-[#8f8f8f]"
            >
              Skybox{n}
            </div>
          ))}
        </div>
      </main>
    </div>
  );
}
